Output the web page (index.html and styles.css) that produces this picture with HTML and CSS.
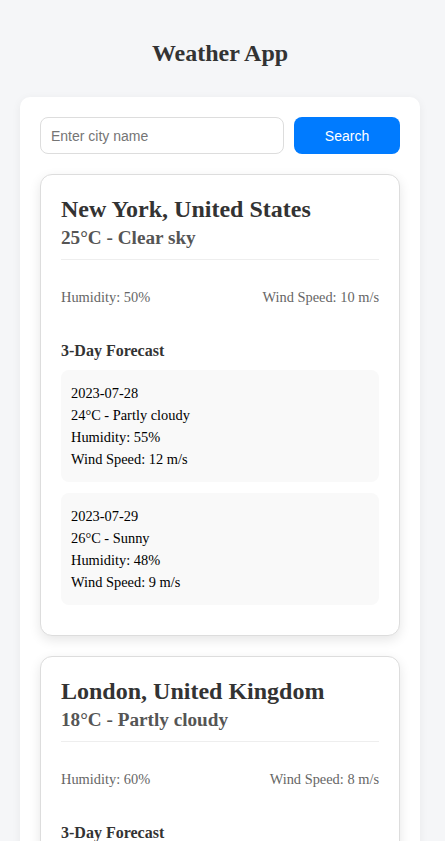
FILE: index.html
```html
<!DOCTYPE html>
<html lang="en">
<head>
<meta charset="utf-8">
<title>Weather App</title>
<link rel="stylesheet" href="styles.css">
</head>
<body>
<div class="app">
  <h1 class="app-title">Weather App</h1>
  <div class="panel">
    <form class="search">
      <input class="search-input" type="text" placeholder="Enter city name">
      <button class="search-btn" type="button">Search</button>
    </form>

    <div class="card">
      <div class="card-head">
        <h2 class="city">New York, United States</h2>
        <h3 class="current">25°C - Clear sky</h3>
      </div>
      <div class="details">
        <span>Humidity: 50%</span>
        <span>Wind Speed: 10 m/s</span>
      </div>
      <h4 class="forecast-title">3-Day Forecast</h4>
      <div class="forecast-item">
        <p>2023-07-28</p>
        <p>24°C - Partly cloudy</p>
        <p>Humidity: 55%</p>
        <p>Wind Speed: 12 m/s</p>
      </div>
      <div class="forecast-item">
        <p>2023-07-29</p>
        <p>26°C - Sunny</p>
        <p>Humidity: 48%</p>
        <p>Wind Speed: 9 m/s</p>
      </div>
    </div>

    <div class="card">
      <div class="card-head">
        <h2 class="city">London, United Kingdom</h2>
        <h3 class="current">18°C - Partly cloudy</h3>
      </div>
      <div class="details">
        <span>Humidity: 60%</span>
        <span>Wind Speed: 8 m/s</span>
      </div>
      <h4 class="forecast-title">3-Day Forecast</h4>
      <div class="forecast-item">
        <p>2023-07-28</p>
        <p>19°C - Light rain</p>
        <p>Humidity: 65%</p>
        <p>Wind Speed: 9 m/s</p>
      </div>
      <div class="forecast-item">
        <p>2023-07-29</p>
        <p>20°C - Cloudy</p>
        <p>Humidity: 62%</p>
        <p>Wind Speed: 7 m/s</p>
      </div>
    </div>
  </div>
</div>
</body>
</html>
```
FILE: styles.css
```css
* { box-sizing: border-box; }

html, body {
  margin: 0;
  padding: 0;
  background: #f5f6f8;
  font-family: "Liberation Serif", "Times New Roman", serif;
  color: #000;
}

.app {
  max-width: 400px;
  margin-left: 20px;
}

.app-title {
  font-size: 24px;
  font-weight: bold;
  color: #333;
  text-align: center;
  margin: 0;
  padding: 39px 0 30px;
  line-height: 28px;
}

.panel {
  background: #fff;
  border-radius: 10px;
  box-shadow: 0 2px 10px rgba(0, 0, 0, 0.06);
  padding: 20px;
}

.search {
  display: flex;
  gap: 10px;
  margin: 0 0 20px;
}

.search-input {
  flex: 1;
  min-width: 0;
  height: 37px;
  border: 1px solid #ddd;
  border-radius: 8px;
  padding: 0 10px;
  font-family: "Liberation Sans", Arial, sans-serif;
  font-size: 14px;
  color: #333;
  background: #fff;
}

.search-input::placeholder { color: #757575; }

.search-btn {
  width: 106px;
  height: 37px;
  border: none;
  border-radius: 8px;
  background: #007bff;
  color: #fff;
  font-family: "Liberation Sans", Arial, sans-serif;
  font-size: 14px;
}

.card {
  border: 1px solid #ddd;
  border-radius: 12px;
  box-shadow: 0 4px 12px rgba(0, 0, 0, 0.1);
  padding: 20px 20px 30px;
  margin-bottom: 20px;
  background: #fff;
}

.card-head {
  border-bottom: 1px solid #eee;
  padding-bottom: 10px;
}

.city {
  margin: 0;
  font-size: 24px;
  line-height: 28px;
  color: #333;
}

.current {
  margin: 4px 0 0;
  font-size: 19.2px;
  line-height: 22px;
  color: #555;
}

.details {
  display: flex;
  justify-content: space-between;
  margin-top: 29px;
  font-size: 14.4px;
  line-height: 17px;
  color: #666;
}

.forecast-title {
  margin: 36px 0 10px;
  font-size: 16px;
  line-height: 18px;
  color: #333;
}

.forecast-item {
  background: #f9f9f9;
  border-radius: 8px;
  padding: 12px 10px;
}

.forecast-item + .forecast-item {
  margin-top: 11px;
}

.forecast-item p {
  margin: 0;
  font-size: 14.4px;
  line-height: 22px;
}
```
